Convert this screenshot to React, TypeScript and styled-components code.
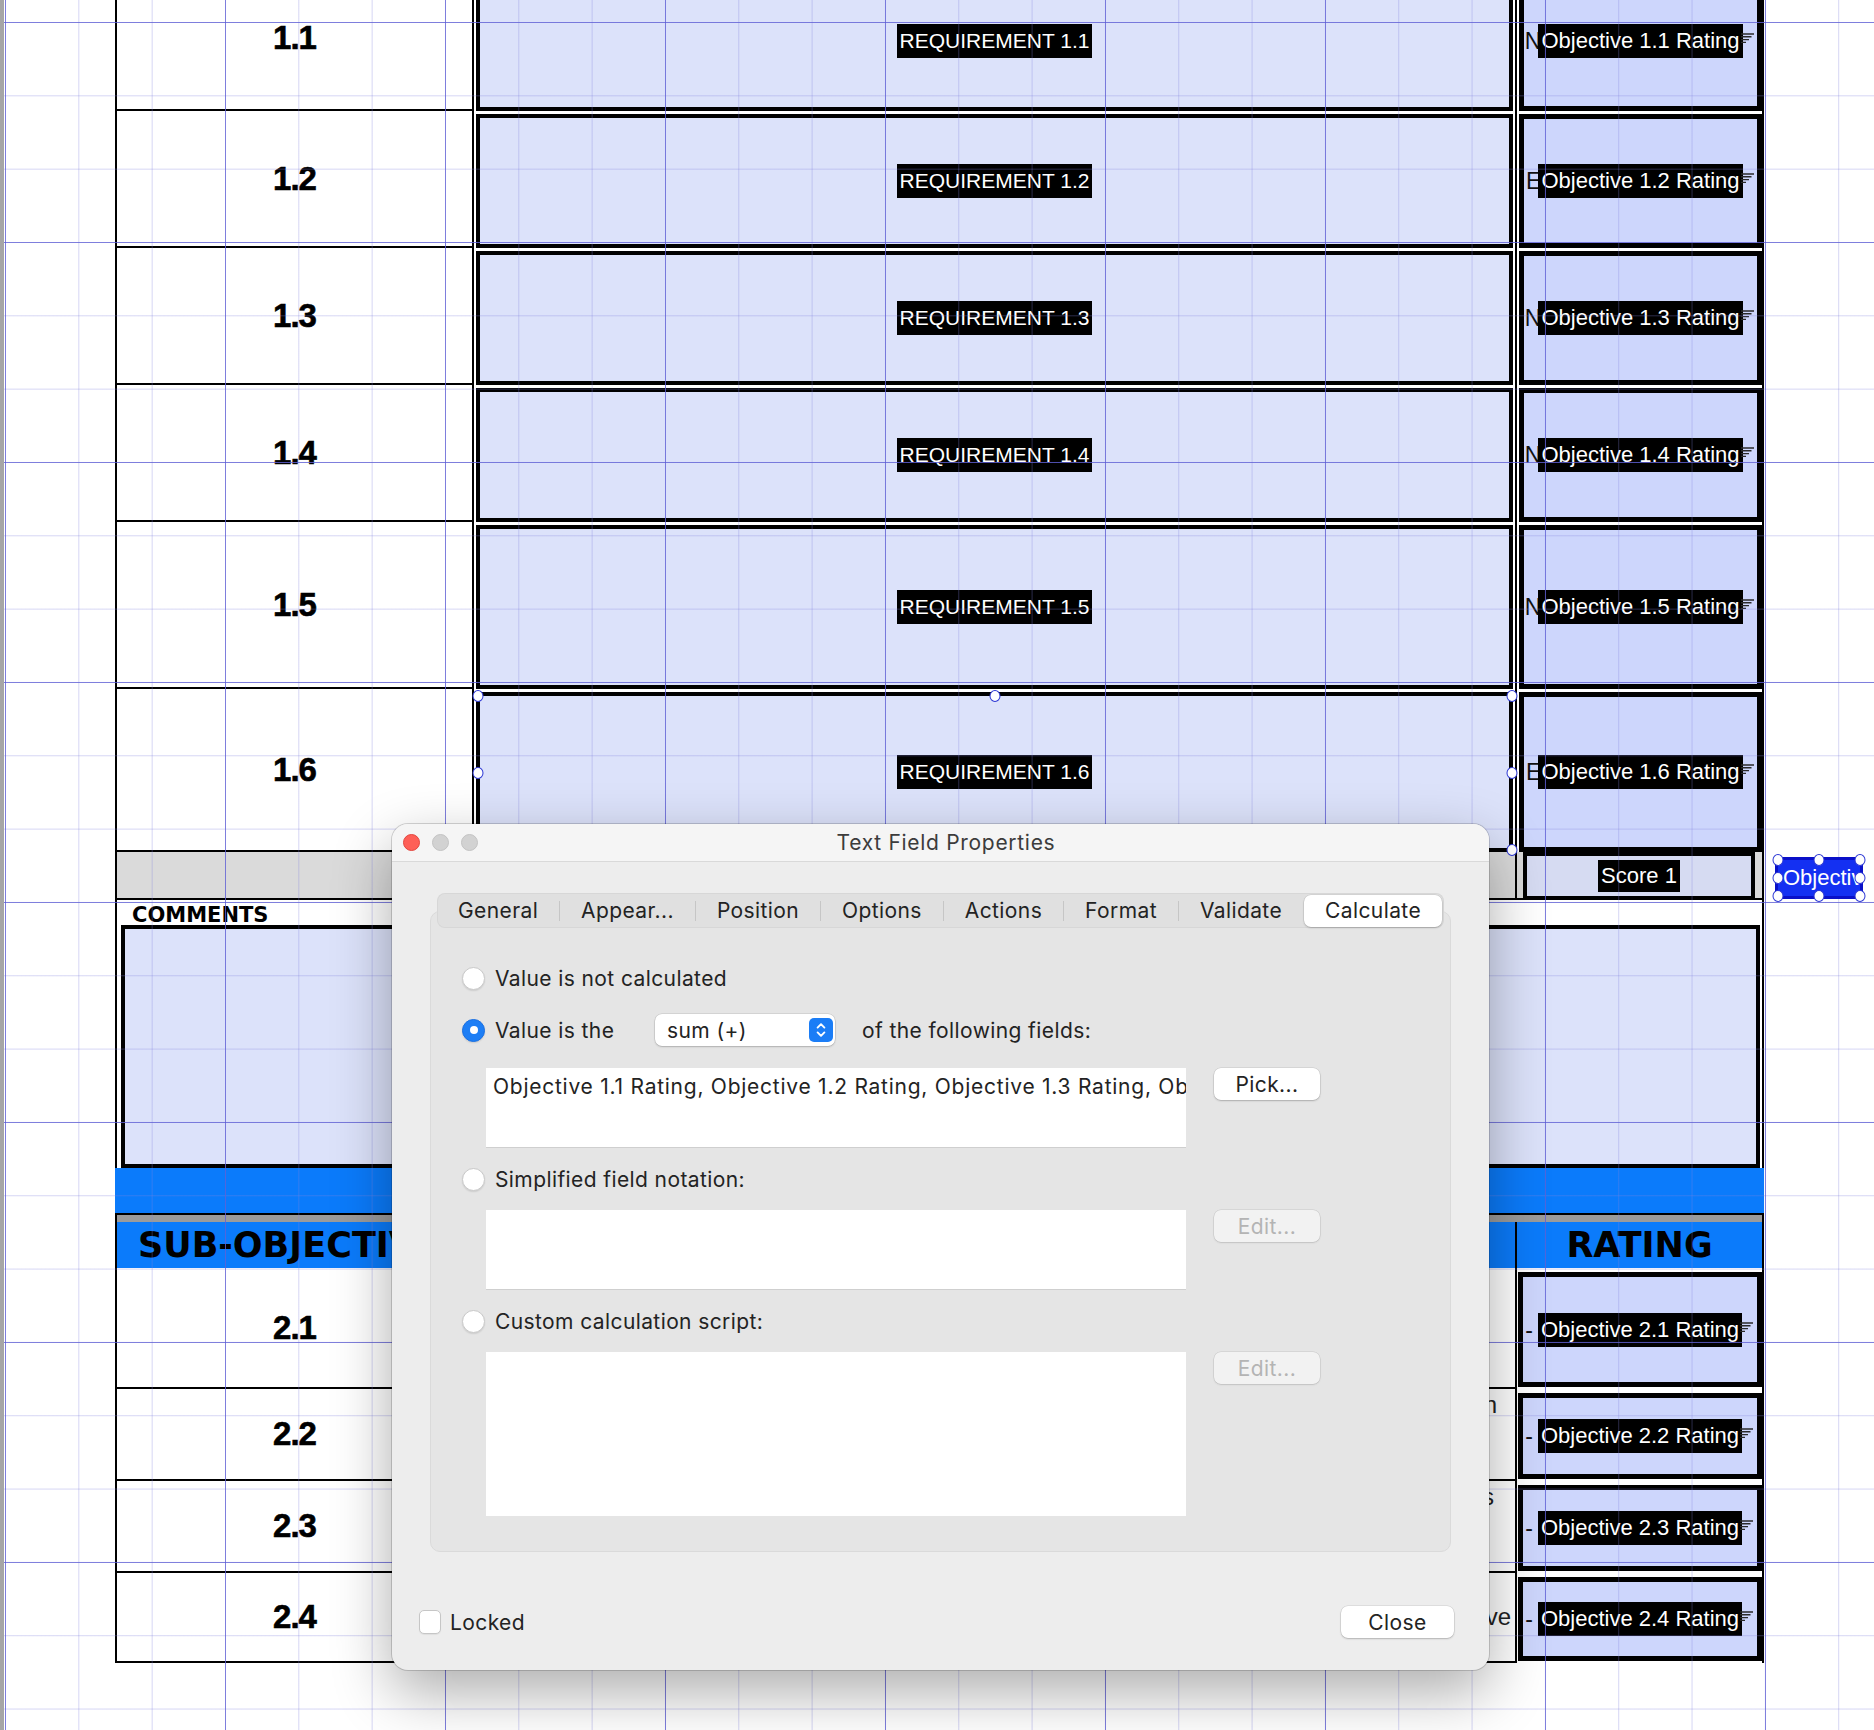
import { Fragment } from 'react';
import styled, { createGlobalStyle } from 'styled-components';

const GlobalStyle = createGlobalStyle`
    *, *::before, *::after {
        box-sizing: border-box;
    }
    html, body {
        margin: 0;
        padding: 0;
        background: #ffffff;
    }
    body {
        font-family: 'Liberation Sans', Arial, sans-serif;
    }
`;

interface ObjectiveRow {
    id: string;
    height: number;
    mark: string;
    selected?: boolean;
}

interface SubRow {
    id: string;
    height: number;
    note?: string;
    noteTop?: boolean;
    notePad?: number;
}

// 1번 섹션 행
const SECTION_ONE: ObjectiveRow[] = [
    { id: '1.1', height: 144, mark: 'N' },
    { id: '1.2', height: 137, mark: 'E' },
    { id: '1.3', height: 137, mark: 'N' },
    { id: '1.4', height: 137, mark: 'N' },
    { id: '1.5', height: 167, mark: 'N' },
    { id: '1.6', height: 163, mark: 'E', selected: true },
];

// 2번 섹션 행
const SECTION_TWO: SubRow[] = [
    { id: '2.1', height: 121 },
    { id: '2.2', height: 92, note: 'Record the method of evaluation', noteTop: true, notePad: 18 },
    { id: '2.3', height: 92, note: 'Outline the key results and metrics', noteTop: true, notePad: 21 },
    { id: '2.4', height: 90, note: 'Describe the sub-objective', notePad: 4 },
];

const TABS = ['General', 'Appear...', 'Position', 'Options', 'Actions', 'Format', 'Validate', 'Calculate'];

const HANDLE_POINTS = [
    [0, 0],
    [50, 0],
    [100, 0],
    [0, 50],
    [100, 50],
    [0, 100],
    [50, 100],
    [100, 100],
];

const Handles = () => (
    <>
        {HANDLE_POINTS.map(([x, y]) => (
            <Handle key={`${x}-${y}`} style={{ left: `${x}%`, top: `${y}%` }} />
        ))}
    </>
);

const RatingTag = ({ mark, label }: { mark: string; label: string }) => (
    <TagWrap>
        <Mark $dash={mark === '-'}>{mark}</Mark>
        <Tag $size={22}>{label}</Tag>
        <Overflow width="13" height="11" viewBox="0 0 13 11">
            <path d="M0 1h13M0 3.8h10.5M0 6.6h8M0 9.4h5" stroke="#2a2a2a" strokeWidth="1.4" fill="none" />
        </Overflow>
    </TagWrap>
);

const App = () => {
    return (
        <>
            <GlobalStyle />
            <Page>
                <Sheet>
                    {SECTION_ONE.map((row) => (
                        <Row key={row.id} $h={row.height}>
                            <NumCell>{row.id}</NumCell>
                            <ReqCell>
                                <FieldBox>
                                    <Tag $size={21}>REQUIREMENT {row.id}</Tag>
                                    {row.selected && (
                                        <HandleFrame>
                                            <Handles />
                                        </HandleFrame>
                                    )}
                                </FieldBox>
                            </ReqCell>
                            <RateCell>
                                <RateBox>
                                    <RatingTag mark={row.mark} label={`Objective ${row.id} Rating`} />
                                </RateBox>
                            </RateCell>
                        </Row>
                    ))}

                    {/* 점수 행 */}
                    <Row $h={48}>
                        <GrayCell />
                        <GrayCell />
                        <ScoreCell>
                            <ScoreBox>
                                <Tag $size={22} $h={32}>
                                    Score 1
                                </Tag>
                            </ScoreBox>
                        </ScoreCell>
                    </Row>

                    <Comments>
                        <CommentsLabel>COMMENTS</CommentsLabel>
                        <CommentsBox />
                    </Comments>

                    <BlueBand />
                    <Divider />

                    <HeaderRow>
                        <HeaderCell $span>SUB-OBJECTIVES</HeaderCell>
                        <HeaderCell $center>RATING</HeaderCell>
                    </HeaderRow>

                    {SECTION_TWO.map((row) => (
                        <Row key={row.id} $h={row.height}>
                            <NumCell>{row.id}</NumCell>
                            <NoteCell $top={row.noteTop} $pad={row.notePad ?? 4}>
                                {row.note}
                            </NoteCell>
                            <SubRateCell>
                                <RateBox>
                                    <RatingTag mark="-" label={`Objective ${row.id} Rating`} />
                                </RateBox>
                            </SubRateCell>
                        </Row>
                    ))}
                </Sheet>

                <GridOverlay />

                <CanvasField>
                    <CanvasText>Objective 1 Score</CanvasText>
                    <Handles />
                </CanvasField>

                <Dialog>
                    <TitleBar>
                        <Lights>
                            <Light $close />
                            <Light />
                            <Light />
                        </Lights>
                        <Title>Text Field Properties</Title>
                        <span />
                    </TitleBar>

                    <DialogBody>
                        <TabBar>
                            {TABS.map((tab, i) => (
                                <Fragment key={tab}>
                                    {i > 0 && <TabSep $hidden={tab === 'Calculate'} />}
                                    <Tab $active={tab === 'Calculate'}>{tab}</Tab>
                                </Fragment>
                            ))}
                        </TabBar>

                        <Panel>
                            <Option $mt={0}>
                                <Radio />
                                <span>Value is not calculated</span>
                            </Option>

                            <Option $mt={21} $h={32}>
                                <Radio $on />
                                <OptLabel>Value is the</OptLabel>
                                <Select>
                                    <span>sum (+)</span>
                                    <Stepper width="24" height="24" viewBox="0 0 24 24">
                                        <rect width="24" height="24" rx="5" fill="#1b7df6" />
                                        <path
                                            d="M8.6 9.6 12 6.2l3.4 3.4M8.6 14.4 12 17.8l3.4-3.4"
                                            stroke="#fff"
                                            strokeWidth="1.9"
                                            fill="none"
                                            strokeLinecap="round"
                                            strokeLinejoin="round"
                                        />
                                    </Stepper>
                                </Select>
                                <After>of the following fields:</After>
                            </Option>

                            <FieldRow $mt={22}>
                                <FieldArea $h={80}>
                                    Objective 1.1 Rating, Objective 1.2 Rating, Objective 1.3 Rating, Objective 1.4
                                    Rating, Objective 1.5 Rating, Objective 1.6 Rating
                                </FieldArea>
                                <PushButton>Pick...</PushButton>
                            </FieldRow>

                            <Option $mt={16}>
                                <Radio />
                                <span>Simplified field notation:</span>
                            </Option>

                            <FieldRow $mt={16}>
                                <FieldArea $h={80} />
                                <PushButton $disabled>Edit...</PushButton>
                            </FieldRow>

                            <Option $mt={16}>
                                <Radio />
                                <span>Custom calculation script:</span>
                            </Option>

                            <FieldRow $mt={16}>
                                <FieldArea $h={164} $flat />
                                <PushButton $disabled>Edit...</PushButton>
                            </FieldRow>
                        </Panel>

                        <Footer>
                            <Locked>
                                <CheckBox />
                                <span>Locked</span>
                            </Locked>
                            <PushButton $w={113}>Close</PushButton>
                        </Footer>
                    </DialogBody>
                </Dialog>
            </Page>
        </>
    );
};

export default App;

const Page = styled.div`
    position: relative;
    width: 1874px;
    height: 1730px;
    overflow: hidden;
    background: #ffffff;
    border-left: 4px solid #a6a6a6;
`;

// 양식 표
const Sheet = styled.div`
    width: 1649px;
    margin: -33px 0 0 111px;
    border-left: 2px solid #000;
    border-right: 2px solid #000;
`;

const Row = styled.div<{ $h: number }>`
    display: grid;
    grid-template-columns: 357px 1043px 245px;
    height: ${(p) => p.$h}px;
`;

const NumCell = styled.div`
    display: flex;
    align-items: center;
    justify-content: center;
    border-right: 2px solid #000;
    border-bottom: 2px solid #000;
    font-family: 'Liberation Sans', Arial, sans-serif;
    font-weight: 700;
    font-size: 33px;
    letter-spacing: -1px;
    color: #000;
    -webkit-text-stroke: 0.6px #000;
`;

const ReqCell = styled.div`
    border-right: 2px solid #000;
    padding: 3px 2px 0 2px;
`;

const FieldBox = styled.div`
    position: relative;
    height: 100%;
    display: flex;
    align-items: center;
    justify-content: center;
    border: 4px solid #000;
    background: #dce2fa;
`;

const RateCell = styled.div`
    padding: 3px 0 0 2px;
`;

const SubRateCell = styled.div`
    padding: 4px 0 2px 1px;
`;

const RateBox = styled.div`
    height: 100%;
    display: flex;
    align-items: center;
    justify-content: center;
    border: 5px solid #000;
    background: #cdd6fc;
`;

const TagWrap = styled.span`
    position: relative;
    display: inline-flex;
`;

const Tag = styled.span<{ $size: number; $h?: number }>`
    position: relative;
    display: inline-block;
    height: ${(p) => p.$h ?? 34}px;
    line-height: ${(p) => p.$h ?? 34}px;
    padding: 0 3px;
    background: #000;
    color: #fff;
    font-family: 'Liberation Sans', Arial, sans-serif;
    font-size: ${(p) => p.$size}px;
    white-space: nowrap;
`;

const Mark = styled.span<{ $dash: boolean }>`
    position: absolute;
    right: 100%;
    top: 0;
    margin-right: ${(p) => (p.$dash ? 5 : -3)}px;
    line-height: 34px;
    font-size: 23px;
    color: #111;
`;

const Overflow = styled.svg`
    position: absolute;
    left: 100%;
    top: 9px;
    margin-left: -2px;
`;

const HandleFrame = styled.div`
    position: absolute;
    left: -2px;
    right: -3px;
    top: 0;
    bottom: -2px;
`;

const Handle = styled.span`
    position: absolute;
    z-index: 2;
    width: 11px;
    height: 12px;
    border-radius: 50%;
    background: #fff;
    border: 1.5px solid #2b36d4;
    transform: translate(-50%, -50%);
`;

const GrayCell = styled.div`
    background: #dadada;
    border-right: 2px solid #000;
    border-bottom: 2px solid #000;
`;

const ScoreCell = styled.div`
    background: #dadada;
    border-bottom: 2px solid #000;
    padding: 0 7px 0 6px;
`;

const ScoreBox = styled.div`
    height: 100%;
    display: flex;
    align-items: center;
    justify-content: center;
    border: 4px solid #000;
    border-bottom-width: 2px;
    background: #d6dbf2;
`;

const Comments = styled.div`
    padding: 0 2px 0 4px;
`;

const CommentsLabel = styled.div`
    height: 25px;
    padding-left: 11px;
    font-family: 'DejaVu Sans', sans-serif;
    font-weight: 700;
    font-size: 21px;
    line-height: 30px;
    color: #000;
`;

const CommentsBox = styled.div`
    height: 243px;
    border: 4px solid #000;
    background: #dce2fa;
`;

const BlueBand = styled.div`
    height: 45px;
    margin: 0 -2px;
    background: #0b7bfb;
`;

const Divider = styled.div`
    height: 9px;
    border-top: 2px solid #000;
    background: #9b9b9b;
`;

const HeaderRow = styled.div`
    display: grid;
    grid-template-columns: 1400px 245px;
    height: 46px;
    background: #0b7bfb;
`;

const HeaderCell = styled.div<{ $span?: boolean; $center?: boolean }>`
    display: flex;
    align-items: center;
    justify-content: ${(p) => (p.$center ? 'center' : 'flex-start')};
    padding-left: ${(p) => (p.$span ? 21 : 0)}px;
    border-right: ${(p) => (p.$span ? '2px solid #000' : 'none')};
    font-family: 'DejaVu Sans', sans-serif;
    font-weight: 700;
    font-size: 35px;
    color: #000;
`;

const NoteCell = styled.div<{ $top?: boolean; $pad: number }>`
    display: flex;
    align-items: ${(p) => (p.$top ? 'flex-start' : 'center')};
    justify-content: flex-end;
    padding: ${(p) => (p.$top ? 2 : 0)}px ${(p) => p.$pad}px 0 0;
    border-right: 2px solid #000;
    border-bottom: 2px solid #000;
    font-size: 24px;
    line-height: 28px;
    color: #222;
    white-space: nowrap;
    overflow: hidden;
`;

// 배경 격자
const GridOverlay = styled.div`
    position: absolute;
    inset: 0;
    z-index: 1;
    pointer-events: none;
    background-image: linear-gradient(to right, rgba(92, 92, 212, 0.72) 1px, transparent 1px),
        linear-gradient(to bottom, rgba(92, 92, 212, 0.72) 1px, transparent 1px),
        linear-gradient(to right, rgba(130, 130, 222, 0.33) 1px, transparent 1px),
        linear-gradient(to bottom, rgba(130, 130, 222, 0.33) 1px, transparent 1px);
    background-size: 220px 220px, 220px 220px, 73.333px 73.333px, 73.333px 73.333px;
    background-position: 1px 22px, 1px 22px, 1px 22px, 1px 22px;
`;

const CanvasField = styled.div`
    position: absolute;
    z-index: 2;
    left: 1771px;
    top: 857px;
    width: 88px;
    height: 42px;
    background: #1430f2;
    border: 3px solid #0a10c8;
`;

const CanvasText = styled.div`
    height: 100%;
    overflow: hidden;
    padding-left: 5px;
    line-height: 36px;
    font-size: 22px;
    color: #fff;
    white-space: nowrap;
`;

// 속성 대화상자
const Dialog = styled.div`
    position: absolute;
    z-index: 3;
    left: 388px;
    top: 824px;
    width: 1097px;
    border-radius: 16px;
    overflow: hidden;
    background: #ededed;
    box-shadow: 0 0 0 1px rgba(0, 0, 0, 0.16), 0 22px 60px rgba(0, 0, 0, 0.33);
    font-family: Inter, 'Liberation Sans', Arial, sans-serif;
    font-size: 21px;
    letter-spacing: 0.4px;
    color: #232323;
`;

const TitleBar = styled.div`
    display: grid;
    grid-template-columns: 1fr auto 1fr;
    align-items: center;
    height: 38px;
    padding-left: 11px;
    background: #f5f5f5;
    border-bottom: 1px solid #d9d9d9;
`;

const Lights = styled.div`
    display: flex;
    gap: 12px;
`;

const Light = styled.span<{ $close?: boolean }>`
    width: 17px;
    height: 17px;
    border-radius: 50%;
    background: ${(p) => (p.$close ? '#fe5f57' : '#d2d2d2')};
    border: 1px solid ${(p) => (p.$close ? '#e2463f' : '#c3c3c3')};
`;

const Title = styled.div`
    color: #3c3c3c;
    letter-spacing: 0.7px;
`;

const DialogBody = styled.div`
    padding: 31px 0 32px;
`;

const TabBar = styled.div`
    position: relative;
    z-index: 1;
    display: flex;
    align-items: center;
    height: 35px;
    margin: 0 45px;
    padding: 0 2px 0 0;
    border-radius: 8px;
    background: #e0e0e0;
    box-shadow: inset 0 0 0 1px rgba(0, 0, 0, 0.04);
`;

const Tab = styled.div<{ $active?: boolean }>`
    flex: 1 1 auto;
    height: 32px;
    padding: 0 18px;
    line-height: 32px;
    text-align: center;
    white-space: nowrap;
    border-radius: 7px;
    background: ${(p) => (p.$active ? '#ffffff' : 'transparent')};
    box-shadow: ${(p) => (p.$active ? '0 0 0 0.5px rgba(0,0,0,0.1), 0 1px 2px rgba(0,0,0,0.2)' : 'none')};
`;

const TabSep = styled.span<{ $hidden?: boolean }>`
    flex: none;
    width: 1px;
    height: 20px;
    background: ${(p) => (p.$hidden ? 'transparent' : '#c6c6c6')};
`;

const Panel = styled.div`
    margin: -17px 38px 0;
    padding: 51px 31px 35px;
    border: 1px solid #dadada;
    border-radius: 10px;
    background: #e5e5e5;
`;

const Option = styled.div<{ $mt: number; $h?: number }>`
    display: flex;
    align-items: center;
    height: ${(p) => p.$h ?? 30}px;
    margin-top: ${(p) => p.$mt}px;
`;

const Radio = styled.span<{ $on?: boolean }>`
    flex: none;
    display: flex;
    align-items: center;
    justify-content: center;
    width: 23px;
    height: 23px;
    margin-right: 10px;
    border-radius: 50%;
    background: ${(p) => (p.$on ? '#1d7ef5' : '#ffffff')};
    border: 1px solid ${(p) => (p.$on ? '#1a70e2' : '#c9c9c9')};
    box-shadow: 0 1px 1.5px rgba(0, 0, 0, 0.1);

    &::after {
        content: '';
        display: ${(p) => (p.$on ? 'block' : 'none')};
        width: 8px;
        height: 8px;
        border-radius: 50%;
        background: #fff;
    }
`;

const OptLabel = styled.span`
    width: 160px;
`;

const Select = styled.div`
    display: flex;
    align-items: center;
    justify-content: space-between;
    width: 180px;
    height: 32px;
    padding: 0 2px 0 12px;
    border-radius: 7px;
    background: #fff;
    box-shadow: 0 0 0 0.5px rgba(0, 0, 0, 0.14), 0 1px 2px rgba(0, 0, 0, 0.18);
`;

const Stepper = styled.svg`
    flex: none;
`;

const After = styled.span`
    margin-left: 27px;
`;

const FieldRow = styled.div<{ $mt: number }>`
    display: flex;
    align-items: flex-start;
    gap: 28px;
    margin-top: ${(p) => p.$mt}px;
    padding-left: 24px;
`;

const FieldArea = styled.div<{ $h: number; $flat?: boolean }>`
    width: 700px;
    height: ${(p) => p.$h}px;
    padding: 6px 7px;
    line-height: 26px;
    letter-spacing: 0.75px;
    white-space: nowrap;
    overflow: hidden;
    background: #fff;
    border-bottom: 1px solid ${(p) => (p.$flat ? '#ffffff' : '#cfcfcf')};
`;

const PushButton = styled.button<{ $disabled?: boolean; $w?: number }>`
    flex: none;
    width: ${(p) => p.$w ?? 106}px;
    height: 32px;
    padding: 0;
    border: none;
    border-radius: 7px;
    background: ${(p) => (p.$disabled ? '#f2f2f2' : '#ffffff')};
    color: ${(p) => (p.$disabled ? '#b4b4b4' : '#232323')};
    box-shadow: 0 0 0 0.5px rgba(0, 0, 0, 0.12), 0 1px 2px rgba(0, 0, 0, ${(p) => (p.$disabled ? 0.1 : 0.2)});
    font: inherit;
    letter-spacing: inherit;
`;

const Footer = styled.div`
    display: flex;
    align-items: center;
    justify-content: space-between;
    height: 32px;
    margin-top: 54px;
    padding: 0 35px 0 27px;
`;

const Locked = styled.label`
    display: flex;
    align-items: center;
    gap: 9px;
`;

const CheckBox = styled.span`
    width: 22px;
    height: 24px;
    border-radius: 5px;
    background: #fff;
    border: 1px solid #c6c6c6;
    box-shadow: 0 1px 1px rgba(0, 0, 0, 0.06);
`;
